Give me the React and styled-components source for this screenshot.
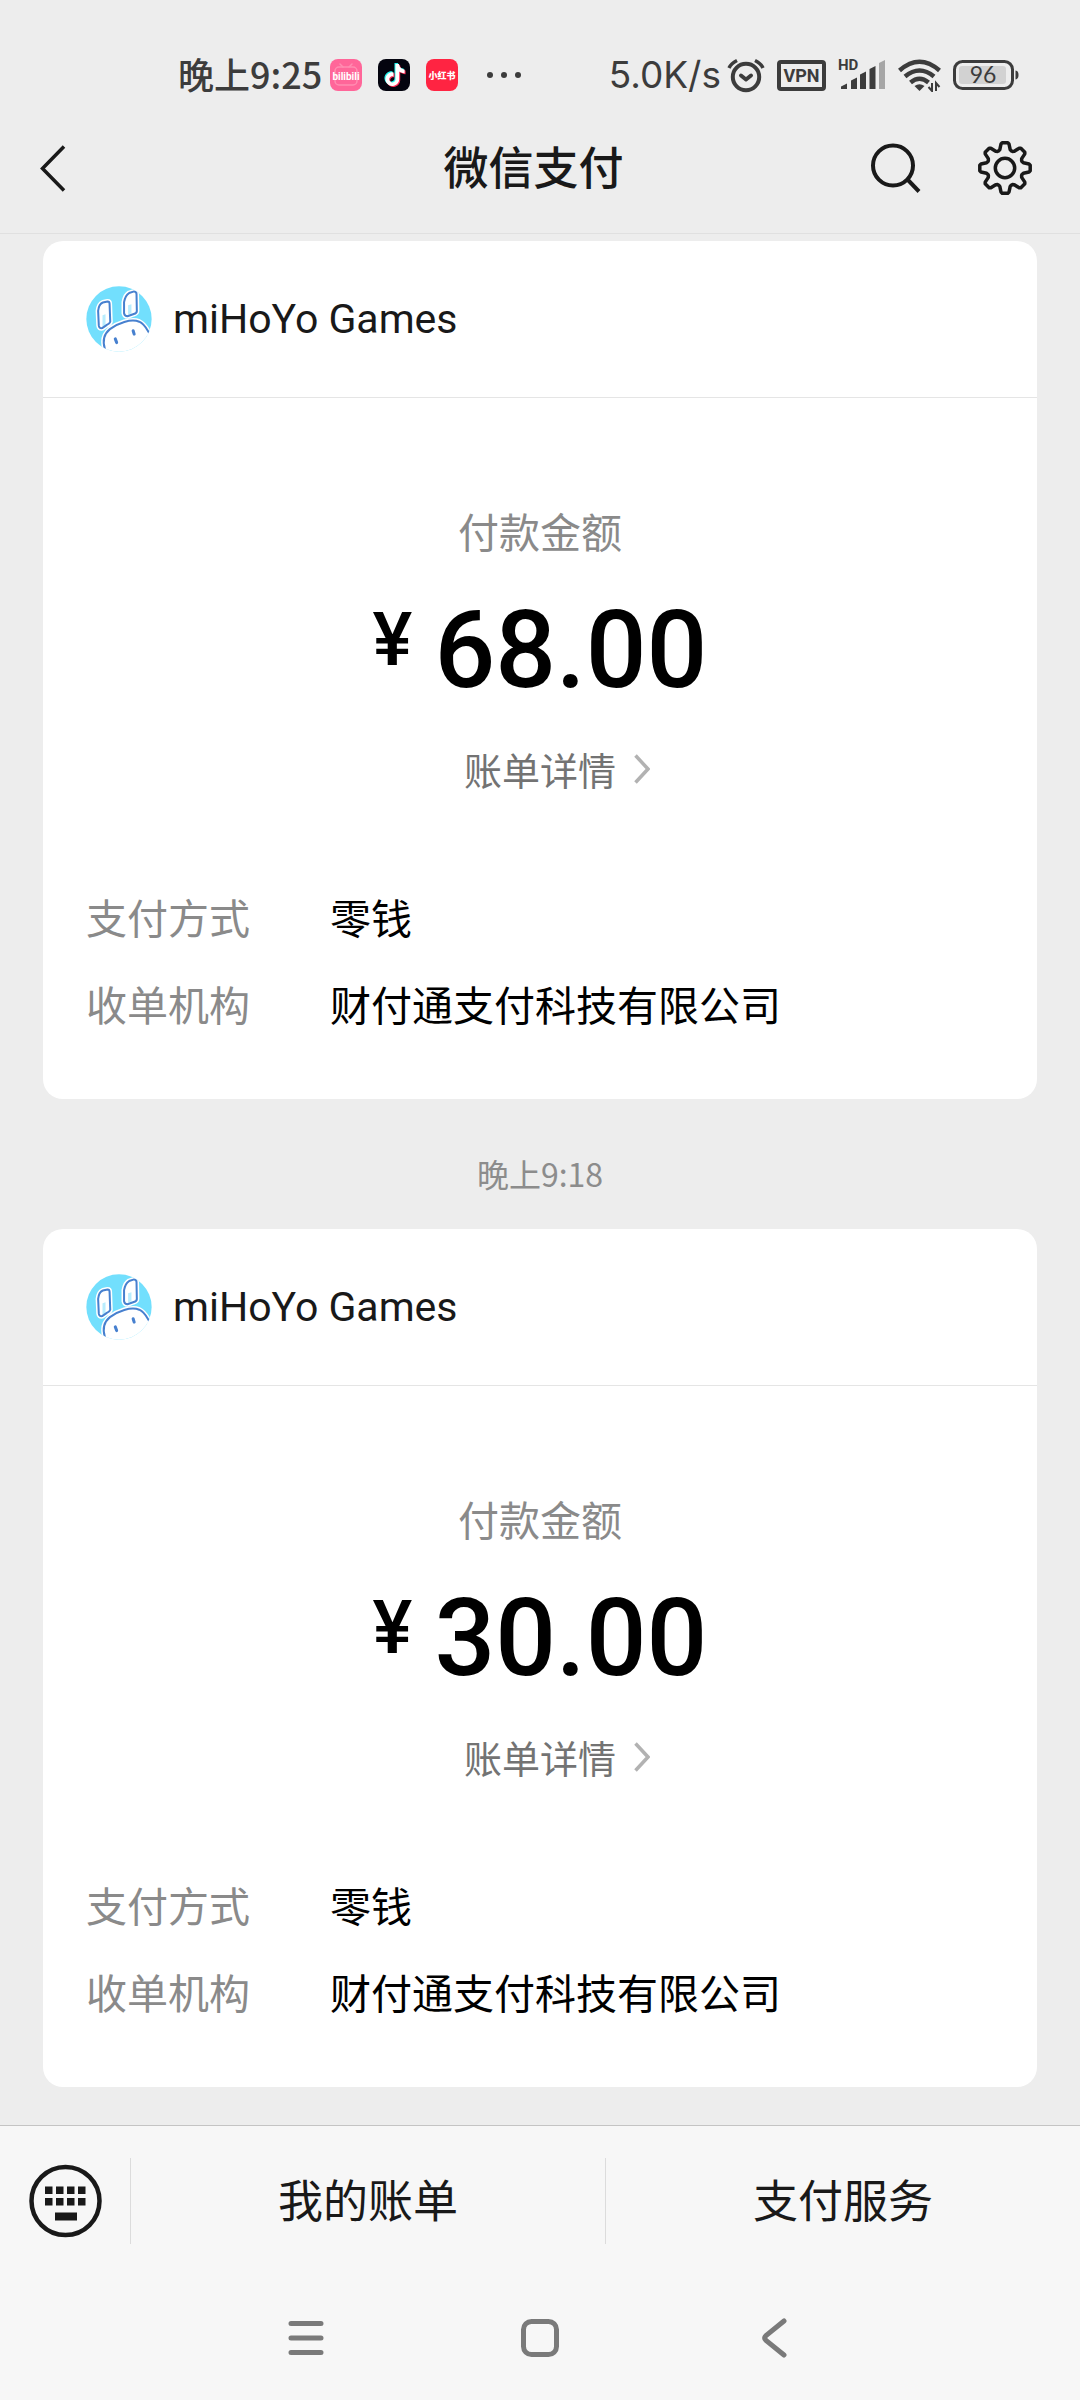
import { SiTiktok } from "react-icons/si";
import styled, { createGlobalStyle } from "styled-components";

const GlobalStyle = createGlobalStyle`
  * {
    box-sizing: border-box;
    margin: 0;
    padding: 0;
  }
  body {
    background-color: #ededed;
    font-family: "Noto Sans CJK SC", sans-serif;
    color: #191919;
  }
  button {
    border: none;
    background: none;
    font: inherit;
    color: inherit;
    cursor: pointer;
  }
  a {
    color: inherit;
    text-decoration: none;
  }
  svg {
    display: block;
    flex: none;
  }
`;

const Page = styled.div`
  display: flex;
  flex-direction: column;
  min-height: 100vh;
`;

const StatusBar = styled.div`
  display: flex;
  justify-content: space-between;
  align-items: center;
  height: 103px;
  padding: 47px 60px 0 178px;
  color: #3c3c3c;
`;
const StatusGroup = styled.div`
  display: flex;
  align-items: center;
  gap: ${(props) => props.gap}px;
`;
const Clock = styled.span`
  padding-bottom: 4px;
  margin-right: -8px;
  font-size: 36px;
  line-height: 40px;
  font-weight: 500;
`;
const NetSpeed = styled.span`
  margin-right: -6px;
  font-family: Inter, sans-serif;
  font-size: 37px;
  line-height: 40px;
`;
const VpnBadge = styled.span`
  width: 49px;
  height: 31px;
  border: 4px solid #3c3c3c;
  border-radius: 4px;
  font-family: Roboto, sans-serif;
  font-size: 18px;
  line-height: 23px;
  font-weight: 700;
  text-align: center;
`;
const AppIcon = styled.span`
  display: flex;
  align-items: center;
  justify-content: center;
  width: 32px;
  height: 32px;
  border-radius: 8px;
  overflow: hidden;
  background-color: ${(props) => props.bg};
`;

const Header = styled.header`
  display: grid;
  grid-template-columns: 1fr auto 1fr;
  align-items: center;
  height: 131px;
  padding: 0 47px 0 34px;
  border-bottom: 1px solid #e0e0e0;
`;
const Title = styled.h1`
  padding-bottom: 4px;
  font-size: 45px;
  line-height: 60px;
  font-weight: 500;
`;
const HeaderActions = styled.div`
  display: flex;
  justify-content: flex-end;
  gap: 53px;
`;
const IconButton = styled.button`
  display: flex;
  justify-content: center;
  align-items: center;
  justify-self: start;
`;

const Feed = styled.main`
  flex: 1;
  padding: 7px 43px 38px;
`;
const Time = styled.p`
  padding: 54px 0 36px;
  font-size: 32px;
  line-height: 40px;
  color: #8c8c8c;
  text-align: center;
`;
const Card = styled.article`
  border-radius: 20px;
  background-color: #fff;
`;
const CardHeader = styled.div`
  display: flex;
  align-items: center;
  gap: 21px;
  height: 157px;
  padding: 0 43px;
  border-bottom: 1px solid #e5e5e5;
`;
const Merchant = styled.h2`
  font-family: Roboto, sans-serif;
  font-size: 41px;
  line-height: 56px;
  font-weight: 400;
`;
const CardBody = styled.div`
  display: flex;
  flex-direction: column;
  align-items: center;
  padding: 104px 43px 66px;
`;
const Label = styled.p`
  font-size: 41px;
  line-height: 56px;
  color: #8a8a8a;
`;
const Amount = styled.p`
  display: flex;
  align-items: flex-start;
  gap: 22px;
  margin: 33px 0 30px;
  font-family: Roboto, sans-serif;
  font-size: 107px;
  line-height: 120px;
  font-weight: 500;
  color: #000;
`;
const Currency = styled.span`
  font-size: 75px;
  line-height: 96px;
`;
const DetailLink = styled.a`
  display: flex;
  align-items: center;
  gap: 18px;
  padding-left: 34px;
  font-size: 38px;
  line-height: 56px;
  color: #737373;
`;
const Info = styled.dl`
  display: grid;
  grid-template-columns: auto 1fr;
  gap: 27px 80px;
  width: 100%;
  margin-top: 89px;
  font-size: 41px;
  line-height: 60px;
`;
const Term = styled.dt`
  color: #8a8a8a;
`;
const Value = styled.dd`
  color: #000;
`;

const Footer = styled.footer`
  border-top: 1px solid #c4c4c4;
  background-color: #f7f7f7;
`;
const Menu = styled.div`
  display: flex;
  align-items: center;
  height: 150px;
`;
const KeyboardButton = styled(IconButton)`
  width: 130px;
  height: 86px;
`;
const MenuButton = styled.button`
  flex: 1;
  height: 86px;
  padding-bottom: 4px;
  border-left: 1px solid #dcdcdc;
  font-size: 45px;
  line-height: 60px;
`;
const NavBar = styled.nav`
  display: flex;
  justify-content: center;
  gap: 194px;
  height: 124px;
`;

const BilibiliIcon = () => (
  <svg width="32" height="32" viewBox="0 0 32 32">
    <g fill="none" stroke="#ff8db1" strokeWidth="1.500" strokeLinecap="round">
      <rect x="5" y="8" width="22" height="18" rx="4" />
      <path d="M10 5l3 3M22 5l-3 3" />
    </g>
    <text x="16" y="21" textAnchor="middle" fontFamily="Roboto, sans-serif" fontSize="10" fontWeight="700" fill="#fff">
      bilibili
    </text>
  </svg>
);

const DouyinIcon = () => (
  <svg width="32" height="32" viewBox="0 0 32 32">
    <SiTiktok x="5" y="4" size="22" color="#25f4ee" />
    <SiTiktok x="7" y="6" size="22" color="#fe2c55" />
    <SiTiktok x="6" y="5" size="22" color="#fff" />
  </svg>
);

const RedBookIcon = () => (
  <svg width="32" height="32" viewBox="0 0 32 32">
    <text x="16" y="20" textAnchor="middle" fontFamily="Noto Sans CJK SC, sans-serif" fontSize="9" fontWeight="900" fill="#fff">
      小红书
    </text>
  </svg>
);

const DotsIcon = () => (
  <svg width="48" height="8" viewBox="0 0 48 8" fill="#3c3c3c">
    <circle cx="16" cy="4" r="3" />
    <circle cx="30" cy="4" r="3" />
    <circle cx="44" cy="4" r="3" />
  </svg>
);

const AlarmIcon = () => (
  <svg width="38" height="36" viewBox="0 0 38 36" fill="none" stroke="#3c3c3c" strokeWidth="4">
    <circle cx="19" cy="20" r="13.200" />
    <path d="M14 18.500l5 4 5-4" strokeLinecap="round" strokeLinejoin="round" />
    <path d="M2 11Q4 6.500 10 3.500M36 11Q34 6.500 28 3.500" strokeWidth="3.500" />
  </svg>
);

const SignalIcon = () => (
  <svg width="48" height="40" viewBox="0 -4 48 40" fill="#3c3c3c">
    <text x="0" y="11" fontFamily="Roboto, sans-serif" fontSize="15" fontWeight="700">
      HD
    </text>
    <path d="M3 27.500l6-3V30H3zM13 21.500l6-3V30h-6zM22 15.500l6-3V30h-6zM31.500 10l6-3v23h-6z" />
    <path d="M41 4l6-3v29h-6z" fill="#a6a6a6" />
  </svg>
);

const WifiIcon = () => (
  <svg width="43" height="34" viewBox="0 0 43 34" fill="none" stroke="#3c3c3c" strokeWidth="4.500">
    <path d="M1.500 12.500Q21.500-5 41.500 12.500" />
    <path d="M7 18.500Q21.500 6.500 36 18.500" />
    <path d="M12.500 24.500Q21.500 17 30.500 24.500" />
    <path d="M16.500 28Q21.500 24.500 26.500 28L21.500 33z" fill="#3c3c3c" stroke="none" />
    <path d="M34 25v8l-3.500-4M38 33v-8l3.500 4" strokeWidth="2" />
  </svg>
);

const BatteryIcon = () => (
  <svg width="67" height="30" viewBox="0 0 67 30">
    <rect x="1.500" y="1.500" width="58" height="27" rx="8" fill="none" stroke="#3c3c3c" strokeWidth="3" />
    <rect x="6" y="6" width="47" height="18" rx="3" fill="#d2d2d2" />
    <path d="M62.500 10.500q3 .5 3 4.500t-3 4.500z" fill="#3c3c3c" />
    <text x="30" y="23" textAnchor="middle" fontFamily="Lato, sans-serif" fontSize="23" fill="#3c3c3c">
      96
    </text>
  </svg>
);

const BackIcon = () => (
  <svg width="38" height="56" viewBox="0 0 38 56" fill="none" stroke="#191919" strokeWidth="3.500">
    <path d="M30 6.500L8.500 28.500 30 50.500" />
  </svg>
);

const SearchIcon = () => (
  <svg width="56" height="56" viewBox="0 0 56 56" fill="none" stroke="#191919" strokeWidth="4">
    <circle cx="25" cy="25.500" r="20" />
    <path d="M39.500 39.500L51 51.500" />
  </svg>
);

const TEETH = [0, 45, 90, 135, 180, 225, 270, 315];

// one tooth, pointing up, given relative to the middle of the gear
const TOOTH = [
  [-6.5, -17],
  [-5.2, -18.4],
  [-4, -24],
  [-2.8, -25.2],
  [2.8, -25.2],
  [4, -24],
  [5.2, -18.4],
  [6.5, -17],
];

const gearPoints = TEETH.map((deg) => {
  const a = (deg * Math.PI) / 180;
  return TOOTH.map(([x, y]) =>
    [28 + x * Math.cos(a) - y * Math.sin(a), 28 + x * Math.sin(a) + y * Math.cos(a)].map((n) => n.toFixed(2)).join(",")
  ).join(" ");
}).join(" ");

const GearIcon = () => (
  <svg width="56" height="56" viewBox="0 0 56 56" fill="none" stroke="#191919" strokeWidth="3.500" strokeLinejoin="round">
    <polygon points={gearPoints} />
    <circle cx="28" cy="28" r="9.700" />
  </svg>
);

const Avatar = () => (
  <svg width="66" height="66" viewBox="48 50 196 196" fill="none" strokeLinecap="round" strokeLinejoin="round">
    <clipPath id="avatar">
      <circle cx="146" cy="148" r="97" />
    </clipPath>
    <g clipPath="url(#avatar)">
      <rect x="48" y="50" width="196" height="196" fill="#72dffd" />
      <g fill="#fff" stroke="#fff" strokeWidth="15">
        <path d="M84 124Q86 104 98 99L112 96Q118 96 118 103L120 156Q118 163 109 166L96 175Q87 177 86 167Z" />
        <path d="M161 98Q165 77 176 71L191 66Q198 66 198 74L199 124Q199 131 190 133L171 140Q163 140 161 131Z" />
        <path d="M104 237C97 214 98 195 119 178C142 161 181 146 206 156C222 163 227 176 235 189L260 260H110Z" />
      </g>
      <path d="M97 137l9-3v33l-9 4zM173 107l10-3v28l-10 3z" fill="#b9edfd" />
      <g stroke="#4780cf" strokeWidth="6">
        <path d="M84 124Q86 104 98 99L112 96Q118 96 118 103L120 156Q118 163 109 166L96 175Q87 177 86 167Z" />
        <path d="M161 98Q165 77 176 71L191 66Q198 66 198 74L199 124Q199 131 190 133L171 140Q163 140 161 131Z" />
        <path d="M104 237C97 214 98 195 119 178C142 161 181 146 206 156C222 163 227 176 235 189" />
        <path d="M135 207l4 11M188 183l3 10" strokeWidth="9" />
      </g>
    </g>
  </svg>
);

const ChevronIcon = () => (
  <svg width="16" height="30" viewBox="0 0 16 30" fill="none" stroke="#b2b2b2" strokeWidth="3.500">
    <path d="M1.500 1.500L14 15 1.500 28.500" />
  </svg>
);

const KeyboardIcon = () => (
  <svg width="74" height="74" viewBox="0 0 74 74" fill="#191919">
    <circle cx="37.500" cy="37" r="34" fill="none" stroke="#191919" strokeWidth="4.500" />
    {[17, 28, 39, 50].map((x) => (
      <path key={x} d={`M${x} 22.500h7.500v7.500h-7.500zM${x} 34h7.500v7.500h-7.500z`} />
    ))}
    <path d="M27 48.500h22v8H27z" />
  </svg>
);

const NavIcon = ({ children }) => (
  <svg width="40" height="40" viewBox="0 0 40 40" fill="none" stroke="#7a7a7a" strokeWidth="5" strokeLinecap="round">
    {children}
  </svg>
);

const payments = [
  { id: 1, amount: "68.00" },
  { id: 2, time: "晚上9:18", amount: "30.00" },
];

function Payment({ time, amount }) {
  return (
    <section>
      {time && <Time>{time}</Time>}
      <Card>
        <CardHeader>
          <Avatar />
          <Merchant>miHoYo Games</Merchant>
        </CardHeader>
        <CardBody>
          <Label>付款金额</Label>
          <Amount>
            <Currency>¥</Currency>
            {amount}
          </Amount>
          <DetailLink href="#detail">
            账单详情
            <ChevronIcon />
          </DetailLink>
          <Info>
            <Term>支付方式</Term>
            <Value>零钱</Value>
            <Term>收单机构</Term>
            <Value>财付通支付科技有限公司</Value>
          </Info>
        </CardBody>
      </Card>
    </section>
  );
}

function App() {
  return (
    <Page>
      <GlobalStyle />
      <StatusBar>
        <StatusGroup gap={16}>
          <Clock>晚上9:25</Clock>
          <AppIcon bg="#ff6699"><BilibiliIcon /></AppIcon>
          <AppIcon bg="#04040f"><DouyinIcon /></AppIcon>
          <AppIcon bg="#ff2442"><RedBookIcon /></AppIcon>
          <DotsIcon />
        </StatusGroup>
        <StatusGroup gap={12}>
          <NetSpeed>5.0K/s</NetSpeed>
          <AlarmIcon />
          <VpnBadge>VPN</VpnBadge>
          <SignalIcon />
          <WifiIcon />
          <BatteryIcon />
        </StatusGroup>
      </StatusBar>
      <Header>
        <IconButton aria-label="返回"><BackIcon /></IconButton>
        <Title>微信支付</Title>
        <HeaderActions>
          <IconButton aria-label="搜索"><SearchIcon /></IconButton>
          <IconButton aria-label="设置"><GearIcon /></IconButton>
        </HeaderActions>
      </Header>
      <Feed>
        {payments.map((payment) => (
          <Payment key={payment.id} time={payment.time} amount={payment.amount} />
        ))}
      </Feed>
      <Footer>
        <Menu>
          <KeyboardButton aria-label="键盘"><KeyboardIcon /></KeyboardButton>
          <MenuButton>我的账单</MenuButton>
          <MenuButton>支付服务</MenuButton>
        </Menu>
        <NavBar>
          <IconButton aria-label="最近任务">
            <NavIcon><path d="M5 5.500h30M5 20h30M5 34.500h30" /></NavIcon>
          </IconButton>
          <IconButton aria-label="主屏幕">
            <NavIcon><rect x="3.500" y="3.500" width="33" height="33" rx="8" /></NavIcon>
          </IconButton>
          <IconButton aria-label="后退">
            <NavIcon><path d="M30 3L12 17.500Q9.500 20 12 22.500L30 37" /></NavIcon>
          </IconButton>
        </NavBar>
      </Footer>
    </Page>
  );
}

export default App;
